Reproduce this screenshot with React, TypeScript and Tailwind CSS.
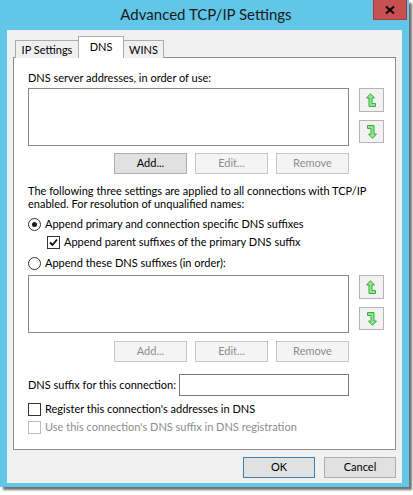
import React from "react";

const font = { fontFamily: 'Lato, "Noto Sans", sans-serif' };

function UpArrow() {
  return (
    <svg width="11" height="15" viewBox="0 0 11 15">
      <path
        d="M4.5 0.7 L8.5 5 L6 5 L6 10.5 L9.5 10.5 L9.5 13.5 L3 13.5 L3 5 L0.5 5 Z"
        fill="#8be88b"
        stroke="#3caa3c"
        strokeWidth="1"
      />
    </svg>
  );
}

function DownArrow() {
  return (
    <svg width="11" height="15" viewBox="0 0 11 15">
      <path
        d="M1.5 1.5 L8 1.5 L8 10 L10.5 10 L6.5 14.3 L2.5 10 L5 10 L5 4.5 L1.5 4.5 Z"
        fill="#8be88b"
        stroke="#3caa3c"
        strokeWidth="1"
      />
    </svg>
  );
}

function ArrowButtons() {
  return (
    <div className="flex flex-col w-[25px]">
      <div className="h-[24px] border border-[#b4b4b4] bg-[#f2f2f2] flex items-center justify-center">
        <UpArrow />
      </div>
      <div className="mt-[8px] h-[23px] border border-[#b4b4b4] bg-[#f2f2f2] flex items-center justify-center">
        <DownArrow />
      </div>
    </div>
  );
}

function Btn({ label, disabled }: { label: string; disabled?: boolean }) {
  return (
    <div
      className={`w-[73px] h-[21px] flex items-center justify-center border ${
        disabled
          ? "bg-[#f4f4f4] border-[#c6c6c6] text-[#8d8d8d]"
          : "bg-[#e1e1e1] border-[#adadad] text-black"
      }`}
    >
      {label}
    </div>
  );
}

function Radio({ checked }: { checked?: boolean }) {
  return (
    <div className="w-[13px] h-[13px] shrink-0 rounded-full border border-[#333] bg-white flex items-center justify-center">
      {checked && <div className="w-[5px] h-[5px] rounded-full bg-[#1a1a1a]" />}
    </div>
  );
}

function Check({ checked, disabled }: { checked?: boolean; disabled?: boolean }) {
  return (
    <div
      className={`w-[13px] h-[13px] shrink-0 border bg-white flex items-center justify-center ${
        disabled ? "border-[#bcbcbc]" : "border-[#333]"
      }`}
    >
      {checked && (
        <svg width="9" height="9" viewBox="0 0 9 9">
          <path d="M1 4.5 L3.5 7 L8 1.5" fill="none" stroke="#111" strokeWidth="1.8" />
        </svg>
      )}
    </div>
  );
}

function ListRow() {
  return (
    <div className="flex">
      <div className="w-[321px] h-[58px] border border-[#828790] bg-white" />
      <div className="ml-[10px]">
        <ArrowButtons />
      </div>
    </div>
  );
}

function ButtonsRow({ allDisabled }: { allDisabled?: boolean }) {
  return (
    <div className="w-[321px] flex justify-end gap-[8px]">
      <Btn label="Add..." disabled={allDisabled} />
      <Btn label="Edit..." disabled />
      <Btn label="Remove" disabled />
    </div>
  );
}

export default function App() {
  return (
    <div className="w-[413px] h-[495px] bg-white" style={font}>
      <div className="w-[409px] h-[487px] bg-[#62c6e9] shadow-[3px_3px_2px_rgba(0,0,0,0.55)] flex flex-col">
        {/* title bar */}
        <div className="relative h-[30px] flex items-center justify-center">
          <span className="text-[15px] text-[#1a1a1a] pl-[3px] pb-[1px]">Advanced TCP/IP Settings</span>
          <div className="absolute right-[2px] top-0 w-[34px] h-[20px] bg-[#c75050] border border-[#a23c3c] border-t-0 flex items-center justify-center">
            <svg width="10" height="8" viewBox="0 0 10 8">
              <path d="M1 0.5 L9 7.5 M9 0.5 L1 7.5" stroke="#000" strokeWidth="2" />
            </svg>
          </div>
        </div>

        {/* client */}
        <div className="mx-[7px] h-[453px] bg-[#f0f0f0] flex flex-col px-[6px] text-[11px] text-black whitespace-nowrap">
          {/* tabs */}
          <div className="flex items-end h-[27px] pl-[2px] relative z-10">
            <div className="h-[18px] w-[64px] border border-b-0 border-[#acacac] bg-[#f0f0f0] flex items-center justify-center mb-[-1px] pt-[1px]">
              IP Settings
            </div>
            <div className="h-[22px] w-[46px] -ml-[1px] border border-b-0 border-[#acacac] bg-white flex items-start justify-center pt-[2px] mb-[-1px]">
              DNS
            </div>
            <div className="h-[18px] w-[41px] -ml-[1px] border border-b-0 border-[#acacac] bg-[#f0f0f0] flex items-center justify-center mb-[-1px] pt-[1px]">
              WINS
            </div>
          </div>

          {/* panel */}
          <div className="h-[393px] border border-[#898c95] bg-white pl-[14px] pt-[12px] flex flex-col">
            <div className="h-[15px] leading-[15px]">DNS server addresses, in order of use:</div>
            <div className="mt-[3px]">
              <ListRow />
            </div>
            <div className="mt-[7px]">
              <ButtonsRow />
            </div>
            <div className="mt-[10px] leading-[13px] whitespace-normal w-[345px]">
              The following three settings are applied to all connections with TCP/IP
              <br />
              enabled. For resolution of unqualified names:
            </div>
            <div className="mt-[6px] h-[16px] flex items-center gap-[4px]">
              <Radio checked />
              <span>Append primary and connection specific DNS suffixes</span>
            </div>
            <div className="mt-[2px] h-[16px] flex items-center gap-[4px] pl-[19px]">
              <Check checked />
              <span>Append parent suffixes of the primary DNS suffix</span>
            </div>
            <div className="mt-[5px] h-[16px] flex items-center gap-[4px]">
              <Radio />
              <span>Append these DNS suffixes (in order):</span>
            </div>
            <div className="mt-[4px]">
              <ListRow />
            </div>
            <div className="mt-[8px]">
              <ButtonsRow allDisabled />
            </div>
            <div className="mt-[12px] h-[22px] flex items-center">
              <span className="w-[151px]">DNS suffix for this connection:</span>
              <div className="w-[170px] h-[22px] border border-[#7a7a7a] bg-white" />
            </div>
            <div className="mt-[5px] h-[16px] flex items-center gap-[4px]">
              <Check />
              <span>Register this connection's addresses in DNS</span>
            </div>
            <div className="mt-[2px] h-[16px] flex items-center gap-[4px] text-[#8d8d8d]">
              <Check disabled />
              <span>Use this connection's DNS suffix in DNS registration</span>
            </div>
          </div>

          {/* dialog buttons */}
          <div className="mt-[7px] flex justify-end gap-[9px] pr-[-1px]">
            <div className="w-[72px] h-[21px] flex items-center justify-center border border-[#3c7fb1] bg-[#e1e1e1]">OK</div>
            <div className="w-[72px] h-[21px] flex items-center justify-center border border-[#adadad] bg-[#e1e1e1]">Cancel</div>
          </div>
        </div>
      </div>
    </div>
  );
}
